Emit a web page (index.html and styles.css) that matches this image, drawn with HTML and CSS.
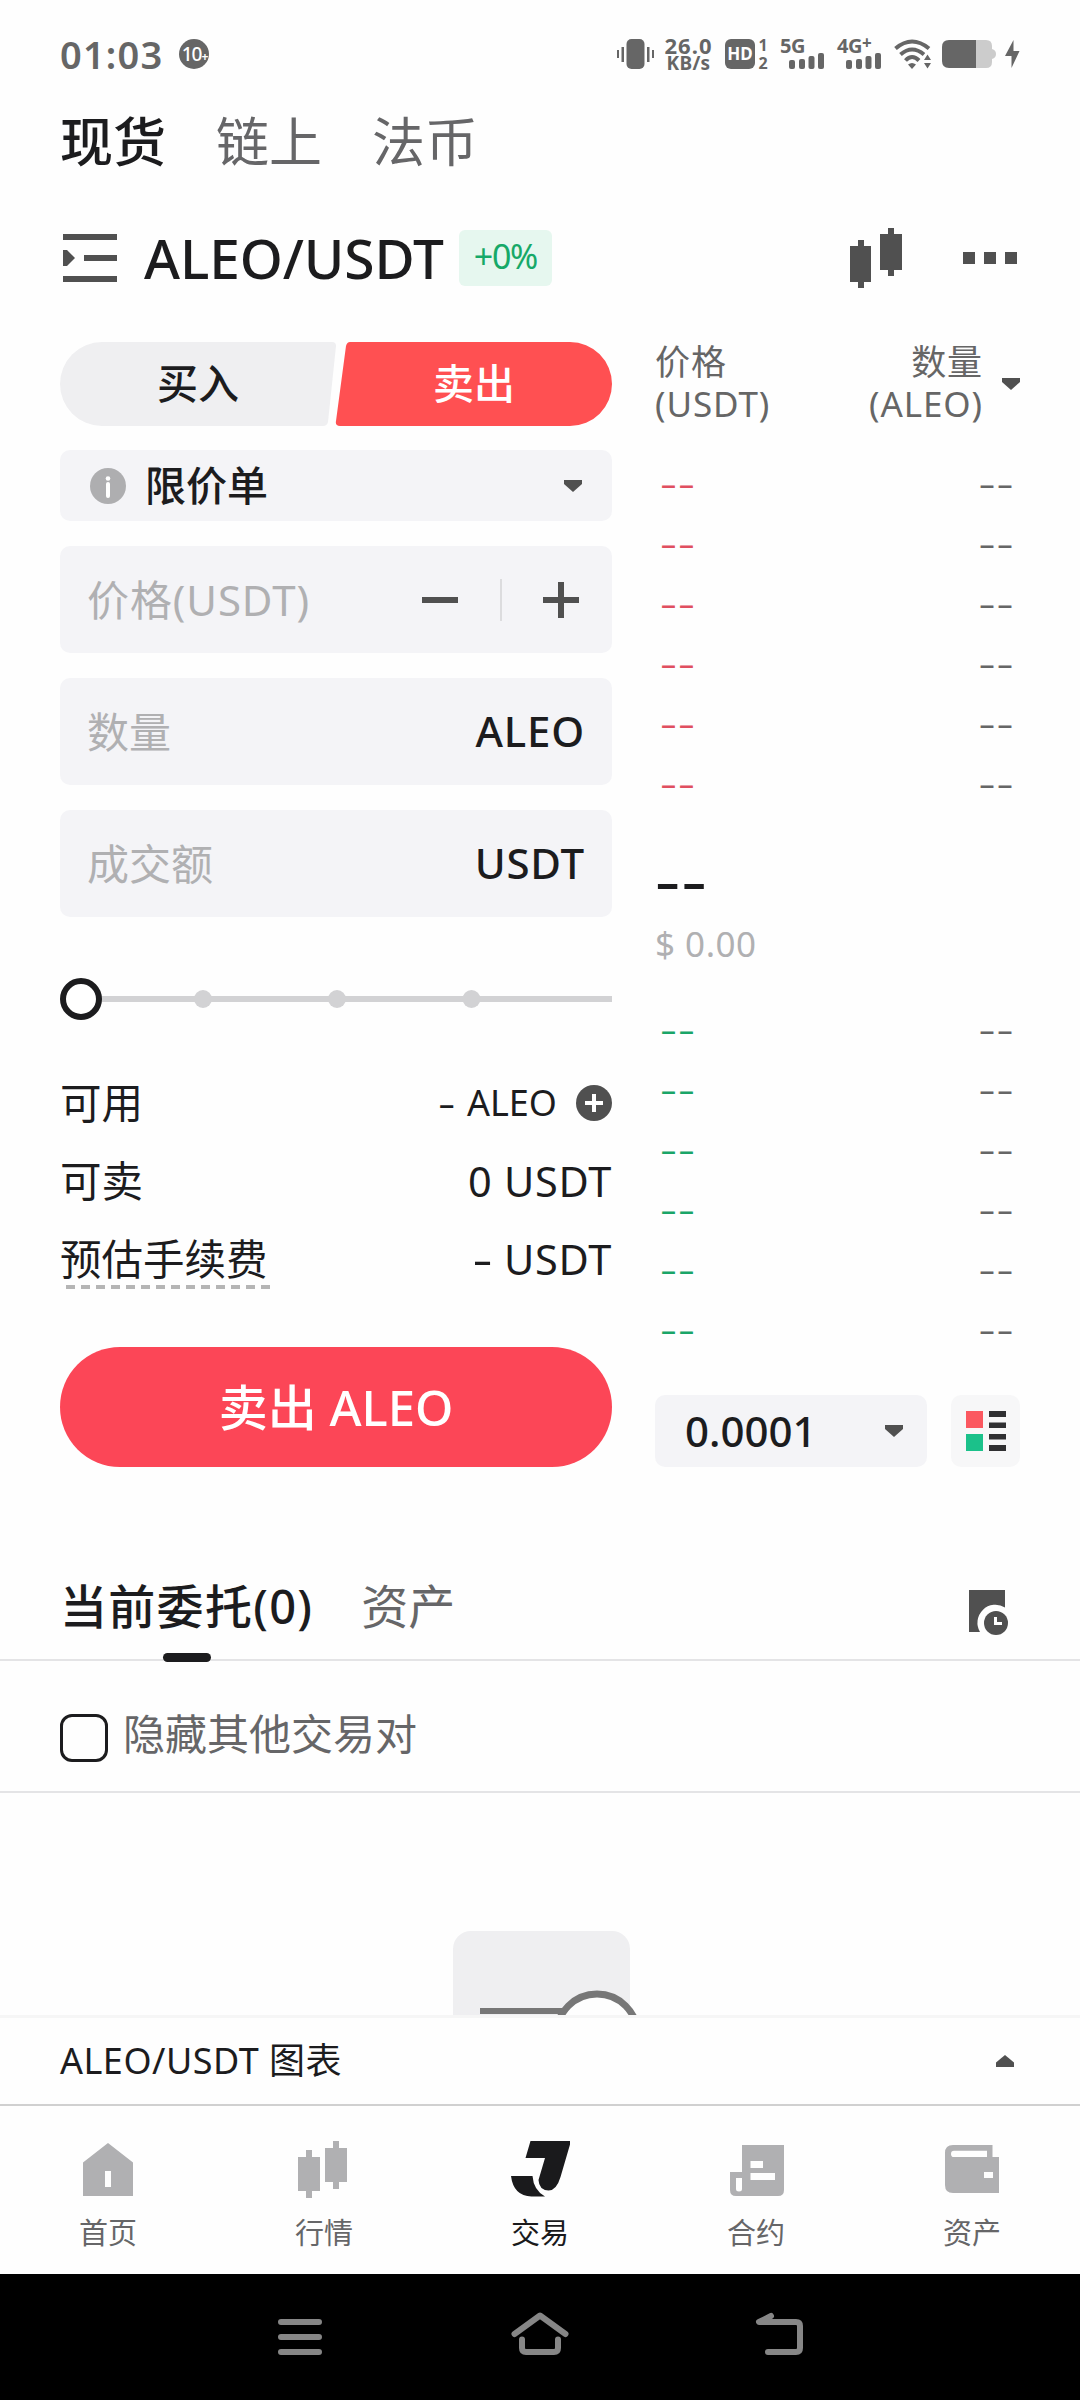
FILE: index.html
```html
<!DOCTYPE html>
<html lang="zh-CN">
<head>
    <meta charset="UTF-8">
    <meta name="viewport" content="width=device-width, initial-scale=1.0">
    <title>ALEO/USDT 现货交易</title>
    <link rel="stylesheet" href="styles.css">
</head>
<body>

<div class="status-bar">
    <span class="time">01:03</span>
    <span class="notice">10<b>+</b></span>
    <div class="status-icons">
        <svg class="i-vibrate" width="37" height="30" viewBox="0 0 37 30" fill="#666">
            <rect x="9.500" width="18" height="30" rx="5"/>
            <path d="M0 11h2v8H0zM4.500 8h2.500v15H4.500zM30 8h2.500v15H30zM35 11h2v8h-2z"/>
        </svg>
        <div class="speed"><span>26.0</span><span class="unit">KB/s</span></div>
        <span class="hd">HD</span>
        <div class="sims"><span>1</span><span>2</span></div>
        <div class="signal s5"><span>5G</span>
            <svg width="36" height="16" viewBox="0 0 36 16" fill="#666"><rect y="7" width="6" height="9" rx="2"/><rect x="10" y="6" width="6" height="10" rx="2"/><rect x="19.500" y="3" width="6" height="13" rx="2"/><rect x="29" width="6" height="16" rx="2"/></svg>
        </div>
        <div class="signal s4"><span>4G<sup>+</sup></span>
            <svg width="36" height="16" viewBox="0 0 36 16" fill="#666"><rect y="7" width="6" height="9" rx="2"/><rect x="10" y="6" width="6" height="10" rx="2"/><rect x="19.500" y="3" width="6" height="13" rx="2"/><rect x="29" width="6" height="16" rx="2"/></svg>
        </div>
        <svg class="i-wifi" width="37" height="30" viewBox="0 0 37 30" fill="none" stroke="#666" stroke-width="4">
            <path d="M1.500 9.500Q18 -4.500 35 9.500M6.500 15.500Q18 5.500 30 15.500M11.500 21.500Q18 14.500 25 21.500"/>
            <path fill="#666" stroke="none" d="M14 25.500q4-3 8 0L18 30zM30 21l3.500-5.500L37 21zM30 24h7l-3.500 5.500z"/>
        </svg>
        <svg class="i-battery" width="54" height="28" viewBox="0 0 54 28">
            <path fill="#ccc" d="M34 0h10q6 0 6 6v3q4 1 4 5t-4 5v3q0 6-6 6H34z"/>
            <path fill="#666" d="M7 0h27v28H7q-7 0-7-7V7q0-7 7-7z"/>
        </svg>
        <svg class="i-bolt" width="15" height="28" viewBox="0 0 15 28" fill="#666"><path d="M8.500 0 0 16h6.500v12L14.500 11H8.500z"/></svg>
    </div>
</div>

<div class="top-tabs">
    <span class="active">现货</span>
    <span>链上</span>
    <span>法币</span>
</div>

<div class="pair-row">
    <svg width="54" height="48" viewBox="0 0 54 48" fill="#505050"><path d="M0 0h54v6H0zM21 21h33v6H21zM0 42h54v6H0zM0 16h4l8 8-8 8H0z"/></svg>
    <span class="pair">ALEO/USDT</span>
    <span class="change">+0%</span>
    <div class="pair-actions">
        <svg width="52" height="60" viewBox="0 0 52 60" fill="#505050"><path d="M8 12h6v6h7v36h-7v6H8v-6H0V18h8zM38 0h6v6h8v36h-8v6h-6v-6h-8V6h8z"/></svg>
        <svg width="54" height="12" viewBox="0 0 54 12" fill="#505050"><path d="M0 0h12v12H0zM21 0h12v12H21zM42 0h12v12H42z"/></svg>
    </div>
</div>

<div class="trade">
    <div class="order-form">
        <div class="side-switch">
            <svg class="side-bg" width="552" height="84" viewBox="0 0 552 84">
                <path fill="#efeff1" d="M42 0H272Q276 0 276 4L268 80Q267 84 263 84H42A42 42 0 0 1 42 0z"/>
                <path fill="#ff5052" d="M290 0H510A42 42 0 0 1 510 84H280Q275 84 276 79L286 4Q287 0 290 0z"/>
            </svg>
            <span class="buy">买入</span>
            <span class="sell">卖出</span>
        </div>

        <div class="field select">
            <svg width="36" height="36" viewBox="0 0 36 36"><circle cx="18" cy="18" r="18" fill="#aeaeb0"/><circle cx="18" cy="10.500" r="2.300" fill="#fff"/><path d="M18 16v12" stroke="#fff" stroke-width="4" stroke-linecap="round"/></svg>
            <span class="type">限价单</span>
            <svg class="caret" width="18" height="12" viewBox="0 0 18 12"><path d="M0 0h18v4l-9 8-9-8z"/></svg>
        </div>

        <div class="field price">
            <span class="placeholder">价格(USDT)</span>
            <svg width="36" height="6" viewBox="0 0 36 6"><path fill="#505050" d="M0 0h36v6H0z"/></svg>
            <i class="sep"></i>
            <svg width="36" height="36" viewBox="0 0 36 36"><path fill="#505050" d="M15 0h6v15h15v6H21v15h-6V21H0v-6h15z"/></svg>
        </div>

        <div class="field"><span class="placeholder">数量</span><span class="coin">ALEO</span></div>
        <div class="field"><span class="placeholder">成交额</span><span class="coin">USDT</span></div>

        <svg class="slider" width="552" height="42" viewBox="0 0 552 42" fill="#d2d2d4">
            <path d="M40 18h512v6H40z"/>
            <circle cx="143" cy="21" r="9"/><circle cx="277" cy="21" r="9"/><circle cx="411.500" cy="21" r="9"/>
            <circle cx="21" cy="21" r="18" fill="#fff" stroke="#1c1c1e" stroke-width="6"/>
        </svg>

        <div class="info">
            <div class="info-row">
                <span>可用</span>
                <span class="value small"><i class="dash">-</i>ALEO
                    <svg width="36" height="36" viewBox="0 0 36 36"><circle cx="18" cy="18" r="18" fill="#505050"/><path d="M9 18h18M18 9v18" stroke="#fff" stroke-width="4"/></svg>
                </span>
            </div>
            <div class="info-row"><span>可卖</span><span class="value">0 USDT</span></div>
            <div class="info-row"><span class="dashed">预估手续费</span><span class="value"><i class="dash">-</i>USDT</span></div>
        </div>

        <button class="submit">卖出 ALEO</button>
    </div>

    <div class="book">
        <div class="book-head">
            <span>价格<br>(USDT)</span>
            <span class="right">数量<br>(ALEO)</span>
            <svg class="caret" width="18" height="12" viewBox="0 0 18 12"><path d="M0 0h18v4l-9 8-9-8z"/></svg>
        </div>
        <div class="asks">
            <div class="book-row"><span>--</span><span>--</span></div>
            <div class="book-row"><span>--</span><span>--</span></div>
            <div class="book-row"><span>--</span><span>--</span></div>
            <div class="book-row"><span>--</span><span>--</span></div>
            <div class="book-row"><span>--</span><span>--</span></div>
            <div class="book-row"><span>--</span><span>--</span></div>
        </div>
        <div class="last">
            <span class="last-price">--</span>
            <span class="last-usd">$ 0.00</span>
        </div>
        <div class="bids">
            <div class="book-row"><span>--</span><span>--</span></div>
            <div class="book-row"><span>--</span><span>--</span></div>
            <div class="book-row"><span>--</span><span>--</span></div>
            <div class="book-row"><span>--</span><span>--</span></div>
            <div class="book-row"><span>--</span><span>--</span></div>
            <div class="book-row"><span>--</span><span>--</span></div>
        </div>
        <div class="book-foot">
            <div class="depth">
                <span>0.0001</span>
                <svg class="caret" width="18" height="12" viewBox="0 0 18 12"><path d="M0 0h18v4l-9 8-9-8z"/></svg>
            </div>
            <div class="layout-btn">
                <svg width="40" height="40" viewBox="0 0 40 40">
                    <path fill="#fb5860" d="M0 0h17v17H0z"/><path fill="#1bc18a" d="M0 23h17v17H0z"/>
                    <path fill="#303032" d="M23 0h17v6H23zM23 11.500h17v5.500H23zM23 23h17v5.500H23zM23 34h17v6H23z"/>
                </svg>
            </div>
        </div>
    </div>
</div>

<div class="order-tabs">
    <span class="active">当前委托(0)</span>
    <span>资产</span>
    <svg width="39" height="45" viewBox="0 0 39 45">
        <path fill="#505050" d="M0 0h36v17.500A18 18 0 0 0 11 42H0z"/>
        <circle cx="27" cy="33" r="12" fill="#505050"/>
        <path fill="none" stroke="#fff" stroke-width="3" d="M26.500 27v6.500H33"/>
    </svg>
</div>

<div class="filter">
    <i class="checkbox"></i>
    <span>隐藏其他交易对</span>
</div>

<div class="empty">
    <svg width="190" height="200" viewBox="0 0 190 200">
        <rect width="177" height="200" rx="18" fill="#efeff1"/>
        <path d="M27 80h85" stroke="#777" stroke-width="6"/>
        <circle cx="144" cy="103.500" r="40.500" fill="#fefefe" stroke="#777" stroke-width="7"/>
    </svg>
</div>

<div class="chart-bar">
    <span>ALEO/USDT 图表</span>
    <svg width="18" height="12" viewBox="0 0 18 12" fill="#505050"><path d="M0 12h18V7.500L9 0 0 7.500z"/></svg>
</div>

<div class="nav">
    <div class="nav-item">
        <svg width="60" height="60" viewBox="0 0 60 60" fill="#b0b0b2"><path fill-rule="evenodd" d="M30 3 55 22.500V56H5V22.500zM27 31v16h6V31z"/></svg>
        <span>首页</span>
    </div>
    <div class="nav-item">
        <svg width="60" height="60" viewBox="0 0 60 60" fill="#b0b0b2"><path d="M12 10h6v7h8v34h-8v7h-6v-7H4V17h8zM39 1h6v7h8v34h-8v7h-6v-7h-8V8h8z"/></svg>
        <span>行情</span>
    </div>
    <div class="nav-item active">
        <svg width="60" height="60" viewBox="0 0 60 60" fill="#1a1a1c"><path d="M20.500 1H61L50.500 37Q46.500 50.500 38.500 50.500 29 50 28.500 40L35 18H15.500zM1 36H22.500Q23.500 50 35 56.500H21.500Q3.500 56 1 36z"/></svg>
        <span>交易</span>
    </div>
    <div class="nav-item">
        <svg width="60" height="60" viewBox="0 0 60 60" fill="#b0b0b2"><path fill-rule="evenodd" d="M16 5H58V50q0 6-6 6H10q-6 0-6-6V32H16zM24.500 21v7H37v-7zM24.500 33v7H49v-7zM10 38v11q0 2.500 3 2.500t3-2.500V38z"/></svg>
        <span>合约</span>
    </div>
    <div class="nav-item">
        <svg width="60" height="60" viewBox="0 0 60 60" fill="#b0b0b2"><path fill-rule="evenodd" d="M11 5H50.500V17H57V53H11Q3 53 3 45V13Q3 5 11 5zM12 10.700q-3 0-3 3.200t3 3.100H45v-6.300zM42 32v6h9v-6z"/></svg>
        <span>资产</span>
    </div>
</div>

<div class="system-nav">
    <svg width="60" height="60" viewBox="0 0 60 60"><path d="M11 18h38M11 33h38M11 48h38"/></svg>
    <svg width="60" height="60" viewBox="0 0 60 60"><path d="M4.500 30 30 11.500 55.500 30M12 35.500V44q0 4 4 4H44q4 0 4-4V35.500"/></svg>
    <svg width="60" height="60" viewBox="0 0 60 60"><path d="M21 12 9 18H46q4 0 4 4V44q0 4-4 4H18"/></svg>
</div>

</body>
</html>
```

FILE: styles.css
```css
* { box-sizing: border-box; }
body { margin: 0; width: 1080px; height: 2400px; overflow: hidden; background-color: #fefefe; color: #1c1c1e; font-family: "Noto Sans", "Noto Sans CJK SC", sans-serif; }
svg { display: block; flex: none; }
.caret { fill: #505050; }

/* status bar */
.status-bar { height: 108px; padding: 0 60px; display: flex; align-items: center; color: #666; font-weight: 700; }
.time { font-size: 38px; line-height: 106px; letter-spacing: 1.2px; font-weight: 600; }
.notice { width: 30px; height: 30px; margin-left: 16px; border-radius: 50%; background-color: #666; color: #fff; font-size: 19px; font-weight: 500; line-height: 30px; letter-spacing: -1px; text-align: center; white-space: nowrap; }
.notice b { font-size: 12px; }
.status-icons { display: flex; align-items: center; margin-left: auto; }
.speed { width: 51px; margin-left: 9px; display: flex; flex-direction: column; align-items: center; font-size: 22px; line-height: 18px; letter-spacing: 1px; }
.speed .unit { font-size: 19px; letter-spacing: 0.3px; }
.hd { width: 30px; height: 30px; margin-left: 11px; border-radius: 6px; background-color: #666; color: #fff; font-size: 17px; line-height: 30px; text-align: center; }
.sims { width: 12px; margin-left: 2px; display: flex; flex-direction: column; align-items: center; font-size: 16px; line-height: 18px; }
.signal { height: 30px; margin-left: 11px; font-size: 20px; line-height: 14px; display: flex; flex-direction: column; white-space: nowrap; }
.signal span { height: 14px; letter-spacing: -0.5px; }
.signal sup { font-size: 17px; line-height: 0; vertical-align: 4px; }
.signal svg { margin-left: 9px; }
.s4 { margin-left: 12px; }
.i-wifi { margin-left: 12px; }
.i-battery { margin-left: 11px; }
.i-bolt { margin-left: 9px; }

/* header */
.top-tabs { height: 72px; padding-left: 60px; display: flex; gap: 50px; font-size: 53px; line-height: 68px; color: #666668; }
.top-tabs .active { color: #1c1c1e; font-weight: 500; }
.pair-row { height: 156px; padding: 0 63px; display: flex; align-items: center; }
.pair { margin-left: 27px; font-size: 55px; line-height: 60px; letter-spacing: -0.1px; font-weight: 500; }
.change { height: 56px; margin-left: 15px; padding: 0 15px; border-radius: 6px; background-color: #e6f7ef; color: #16a968; font-size: 34px; line-height: 53px; letter-spacing: -1.3px; }
.pair-actions { margin-left: auto; display: flex; align-items: center; gap: 61px; }

/* trade area */
.trade { height: 1197px; padding: 6px 60px 0; display: flex; justify-content: space-between; }
.order-form { width: 552px; }
.side-switch { position: relative; height: 84px; display: flex; font-size: 41px; line-height: 83px; text-align: center; font-weight: 500; }
.side-bg { position: absolute; left: 0; top: 0; }
.side-switch span { position: relative; width: 276px; }
.side-switch .sell { color: #fff; }
.field { height: 107px; margin-top: 25px; padding: 0 27px; border-radius: 10px; background-color: #f4f4f7; display: flex; align-items: center; font-size: 42px; }
.select { height: 71px; margin-top: 24px; padding: 0 30px; font-size: 41px; }
.type { margin-left: 19px; margin-right: auto; font-weight: 500; line-height: 69px; }
.placeholder { margin-top: -5px; margin-right: auto; color: #b0b0b2; }
.price .placeholder { letter-spacing: 0.9px; }
.coin { margin-top: -2px; font-weight: 500; letter-spacing: 0.8px; }
.price { padding-right: 33px; }
.sep { width: 2px; height: 42px; margin: 0 41px 0 42px; background-color: #dcdcde; }
.slider { margin-top: 61px; }
.info { margin-top: 44px; }
.info-row { height: 78px; display: flex; align-items: center; justify-content: space-between; font-size: 41.500px; line-height: 58px; }
.value { display: flex; align-items: center; letter-spacing: 0.7px; }
.small { font-size: 36px; letter-spacing: 0; }
.small svg { margin-left: 19px; }
.dash { margin-right: 14px; font-style: normal; transform: scaleX(1.5); }
.dashed { position: relative; }
.dashed::after { content: ""; position: absolute; left: 6px; right: -4px; bottom: -1px; height: 4px; background: repeating-linear-gradient(90deg, #b5b5b5 0 9px, transparent 9px 15px); }
.submit { width: 552px; height: 120px; margin-top: 49px; padding: 0 0 6px; border: none; border-radius: 60px; background-color: #fc4657; color: #fff; font: 500 49px "Noto Sans", "Noto Sans CJK SC", sans-serif; }

/* order book */
.book { width: 365px; }
.book-head { height: 115px; display: flex; align-items: flex-start; color: #666; font-size: 35px; line-height: 42px; letter-spacing: 0.9px; }
.book-head span { margin-top: -1px; }
.book-head .right { margin-left: auto; text-align: right; }
.book-head .caret { margin: 36px 0 0 19px; }
.book-row { height: 60px; padding: 0 5px; display: flex; justify-content: space-between; line-height: 54px; font-size: 33px; letter-spacing: 0.7px; color: #666; }
.book-row span { transform: scaleX(1.6); transform-origin: left; }
.book-row span + span { transform-origin: right; }
.asks .book-row span:first-child { color: #e04f60; }
.bids .book-row span:first-child { color: #1aa568; }
.last { height: 186px; padding-top: 34px; display: flex; flex-direction: column; align-items: flex-start; }
.last-price { font-size: 54px; line-height: 58px; font-weight: 500; letter-spacing: 1px; transform: scaleX(1.45); transform-origin: left; }
.last-usd { margin-top: 6px; font-size: 35px; line-height: 58px; letter-spacing: 0.5px; color: #b0b0b2; }
.book-foot { height: 72px; margin-top: 32px; display: flex; justify-content: space-between; }
.depth { width: 272px; border-radius: 10px; background-color: #f4f4f7; padding: 0 24px 0 30px; display: flex; align-items: center; justify-content: space-between; font-size: 42px; font-weight: 500; line-height: 70px; }
.layout-btn { width: 69px; border-radius: 10px; background-color: #f7f7f8; display: flex; align-items: center; justify-content: center; }

/* orders */
.order-tabs { height: 128px; padding: 42px 72px 0 60px; display: flex; border-bottom: 2px solid #e4e4e6; font-size: 47px; line-height: 62px; color: #666668; }
.order-tabs span { margin-right: 48px; }
.order-tabs .active { position: relative; color: #1c1c1e; font-weight: 500; letter-spacing: 1.3px; }
.order-tabs .active::after { content: ""; position: absolute; left: 103px; top: 78px; width: 48px; height: 9px; border-radius: 5px; background-color: #1c1c1e; }
.order-tabs svg { margin: 15px 0 0 auto; }
.filter { height: 132px; padding: 19px 60px 0; display: flex; align-items: center; border-bottom: 2px solid #e4e4e6; font-size: 42px; line-height: 60px; color: #666668; }
.filter span { margin: -4px 0 0 15px; }
.checkbox { width: 48px; height: 48px; margin-top: 4px; border: 3px solid #1c1c1e; border-radius: 12px; }
.empty { height: 222px; padding: 138px 0 0 453px; overflow: hidden; }
.chart-bar { height: 89px; padding: 0 66px 0 60px; display: flex; align-items: center; justify-content: space-between; border-top: 3px solid #f6f6f6; font-size: 36px; letter-spacing: 0.5px; }
.chart-bar span { margin-top: -6px; }

/* bottom navigation */
.nav { height: 170px; padding-top: 34px; display: flex; border-top: 2px solid #d0d0d0; }
.nav-item { width: 216px; display: flex; flex-direction: column; align-items: center; font-size: 29px; line-height: 40px; color: #666668; }
.nav-item span { margin-top: 13px; }
.nav-item.active { color: #1a1a1c; }
.system-nav { height: 126px; padding: 30px 270px 0; background-color: #000; display: flex; justify-content: space-between; }
.system-nav svg { fill: none; stroke: #868686; stroke-width: 6; stroke-linecap: round; stroke-linejoin: round; }
```
